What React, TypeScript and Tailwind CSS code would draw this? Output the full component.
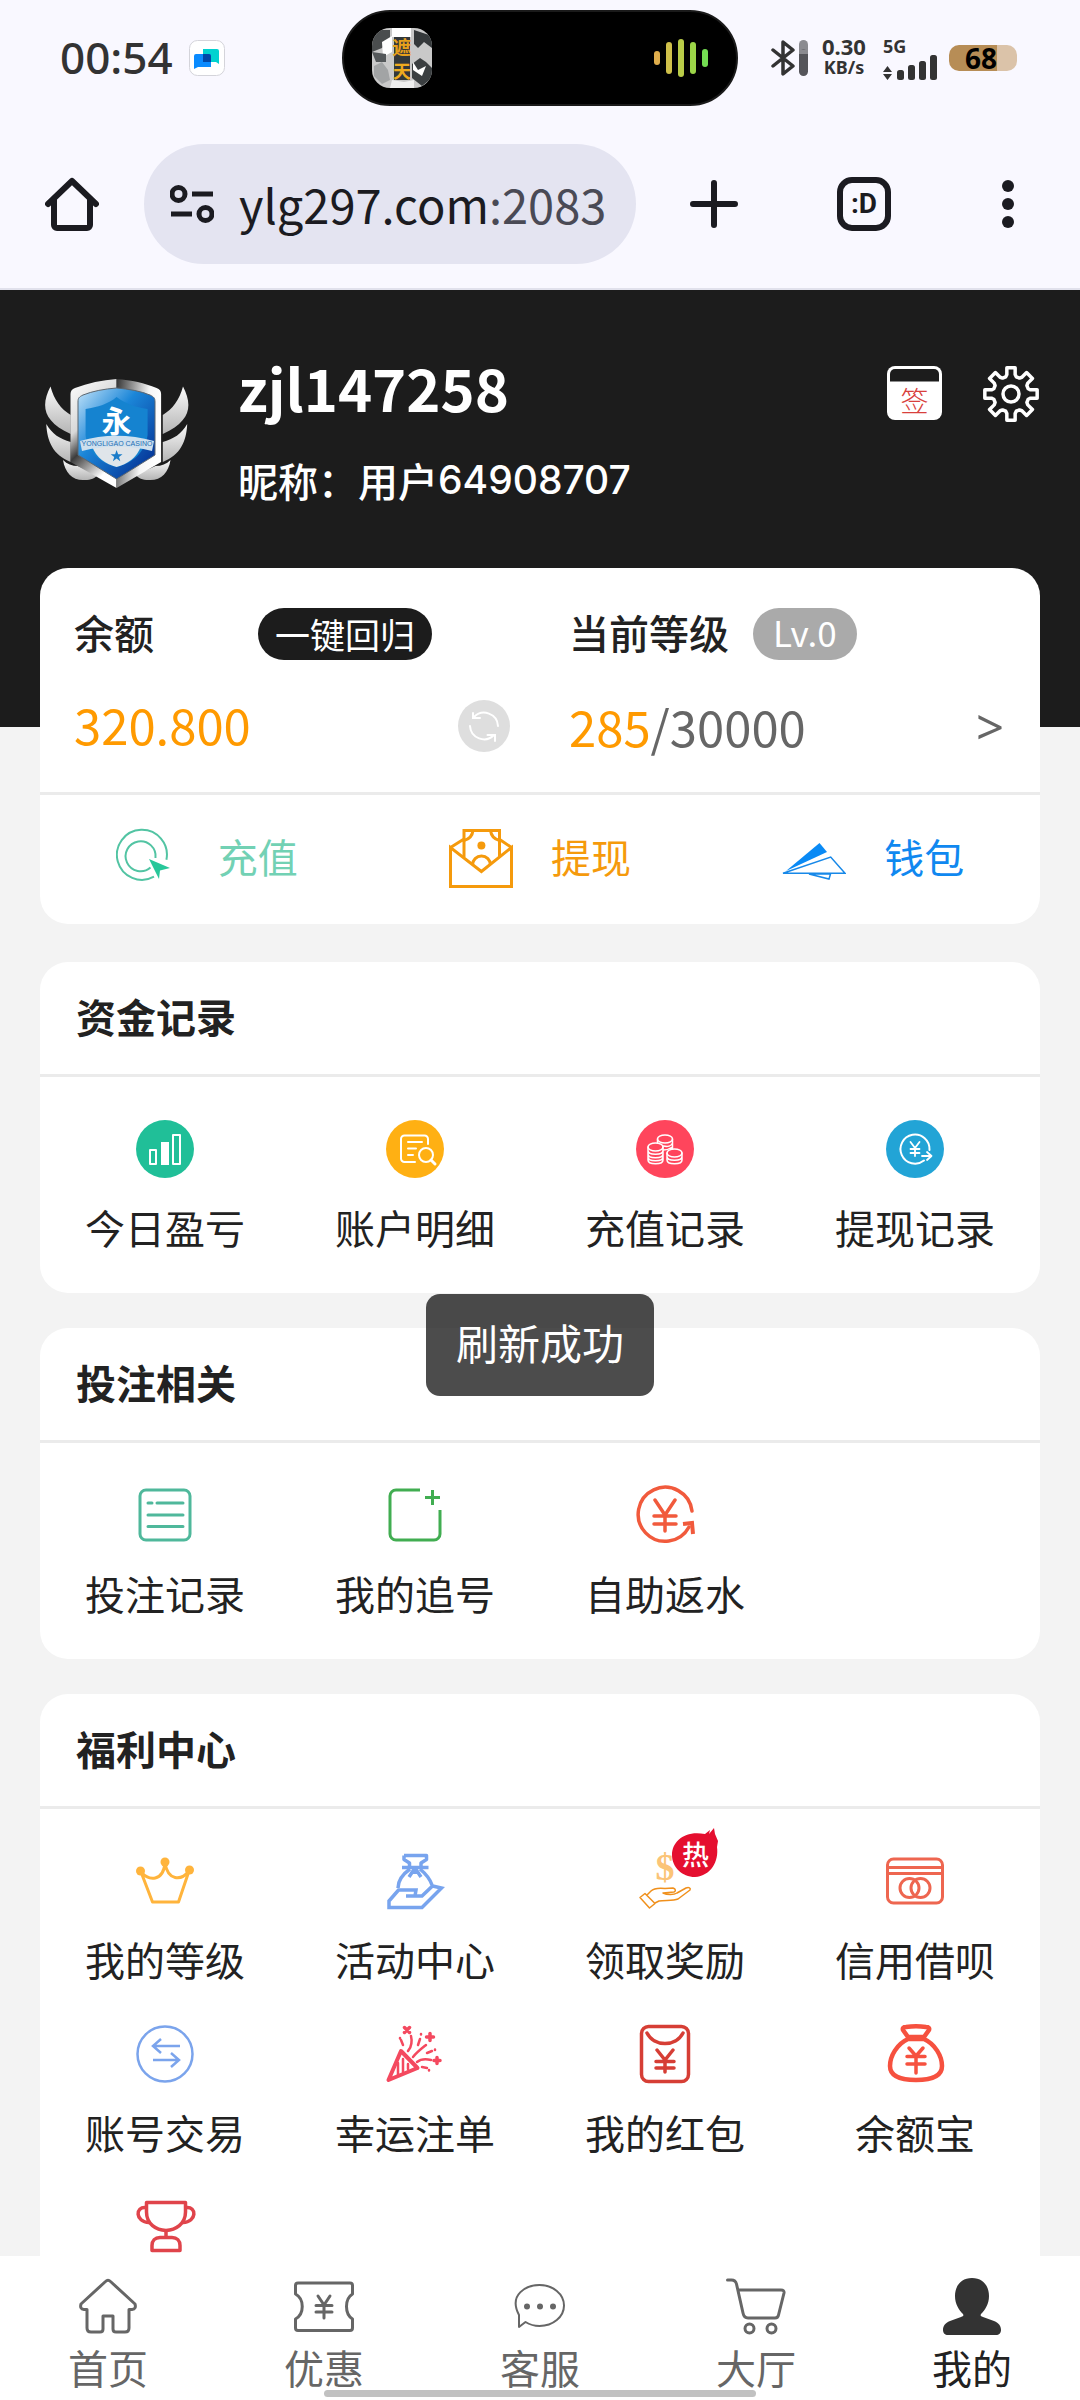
import React from "react";

type IconProps = { children: React.ReactNode; color: string; width?: number };

function TileIcon({ children, color, width = 3 }: IconProps) {
  return (
    <svg
      viewBox="0 0 58 58"
      className="h-[58px] w-[58px] overflow-visible"
      fill="none"
      stroke={color}
      strokeWidth={width}
      strokeLinecap="round"
      strokeLinejoin="round"
      aria-hidden="true"
    >
      {children}
    </svg>
  );
}

function Disc({ children, fill }: { children: React.ReactNode; fill: string }) {
  return (
    <TileIcon color="#fff" width={2}>
      <circle cx="29" cy="29" r="29" fill={fill} stroke="none" />
      {children}
    </TileIcon>
  );
}

const gearPath = (() => {
  const point = (r: number, deg: number) => {
    const a = (deg * Math.PI) / 180;
    return `${(29 + r * Math.cos(a)).toFixed(2)} ${(29 + r * Math.sin(a)).toFixed(2)}`;
  };
  let d = "";
  for (let k = 0; k < 8; k++) {
    const c = k * 45;
    d += `${k === 0 ? "M" : "L"}${point(18, c - 17)}`;
    d += `L${point(20, c - 12)}L${point(26.5, c - 9)}L${point(26.5, c + 9)}L${point(20, c + 12)}L${point(18, c + 17)}`;
  }
  return `${d}Z`;
})();

function StatusBar() {
  return (
    <div className="grid h-[116px] grid-cols-[1fr_396px_1fr] items-center text-[#333]">
      <div className="flex items-center gap-4 pl-[60px]">
        <span className="pb-[3px] font-['Noto_Sans','Noto_Sans_CJK_SC',sans-serif] text-[44px] leading-none font-medium">00:54</span>
        <svg viewBox="0 0 36 36" className="h-9 w-9" aria-hidden="true">
          <rect x="0.5" y="0.5" width="35" height="35" rx="8" fill="#fff" stroke="#d4d4da" />
          <path d="M14 9h14a2 2 0 0 1 2 2v13l-3-2H14z" fill="#00d2d0" />
          <path d="M7 14h13a2 2 0 0 1 2 2v11H9l-4 2V16a2 2 0 0 1 2-2z" fill="#0a8bff" />
          <path d="M14 14h6a2 2 0 0 1 2 2v6h-8z" fill="#0048a8" />
        </svg>
      </div>
      <div className="flex h-24 items-center justify-between rounded-full border-2 border-[#1a1a1a] bg-black pr-[28px] pl-[28px]">
        <svg viewBox="0 0 60 60" className="h-[60px] w-[60px]" aria-hidden="true">
          <defs>
            <clipPath id="cover"><rect width="60" height="60" rx="18" /></clipPath>
          </defs>
          <g clipPath="url(#cover)">
            <rect width="60" height="60" fill="#c9c9c9" />
            <path d="M0 10l8-8h10v10l-8 8-10 4z" fill="#4a4d4e" />
            <path d="M20 0h19v9H20z" fill="#fff" />
            <path d="M42 2l18 6v12l-8-6-6 6-4-4z" fill="#35393b" />
            <path d="M10 14l10-6v16l-9 5z" fill="#fff" />
            <path d="M2 38l8-4 6 8 2 10-8 4-8-8z" fill="#a2a4a5" />
            <path d="M0 24l14 2v8L4 34z" fill="#54585a" />
            <path d="M40 36l8-6 6 4 6 6v10l-10 8-10-8z" fill="#3b3f41" />
            <path d="M41 34l5 8 8-4-4 10-9-6z" fill="#fff" />
            <path d="M20 52l12 2 10-2v8H18z" fill="#efefef" />
            <path d="M22 9h16v43H22z" fill="#33383a" />
          </g>
          <text x="30" y="27" textAnchor="middle" fontSize="19" fontWeight="700" fill="#e8a01b" fontFamily="'Noto Sans CJK SC', sans-serif">遮</text>
          <text x="30" y="50" textAnchor="middle" fontSize="18" fontWeight="700" fill="#f0ab1e" fontFamily="'Noto Sans CJK SC', sans-serif">天</text>
        </svg>
        <svg viewBox="0 0 54 38" className="h-[38px] w-[54px]" strokeWidth="6" strokeLinecap="round" aria-hidden="true">
          <path d="M3 15v8" stroke="#e0ae4c" />
          <path d="M15 6v26" stroke="#cfc04a" />
          <path d="M27 3v32" stroke="#b9cc48" />
          <path d="M39 6v26" stroke="#9cd548" />
          <path d="M51 13v12" stroke="#74dd52" />
        </svg>
      </div>
      <div className="flex items-center pl-[33px] font-['Noto_Sans','Noto_Sans_CJK_SC',sans-serif] font-bold">
        <svg viewBox="0 0 37 36" className="h-9 w-[37px] shrink-0" fill="none" aria-hidden="true">
          <path d="M2 10l20 16-10 8V2l10 8L2 26" stroke="#333" strokeWidth="3.500" strokeLinejoin="round" strokeLinecap="round" />
          <path d="M32.500 4.500v10" stroke="#8b8b90" strokeWidth="9" strokeLinecap="round" />
          <path d="M32.500 14v17.500" stroke="#55555a" strokeWidth="9" strokeLinecap="round" />
          <path d="M28 10h9v4h-9z" fill="#8b8b90" />
        </svg>
        <div className="ml-[14px] flex flex-col items-center pb-1">
          <span className="text-[22px] leading-[22px]">0.30</span>
          <span className="text-[18px] leading-[20px]">KB/s</span>
        </div>
        <div className="ml-[17px] flex flex-col">
          <span className="text-[18px] leading-[18px]">5G</span>
          <svg viewBox="0 0 54 25" className="h-[25px] w-[54px]" fill="#333" aria-hidden="true">
            <path d="M4.500 11l4.500 6H0zM4.500 25L0 19h9z" />
            <rect x="14" y="15" width="7" height="10" rx="2.500" />
            <rect x="25" y="10" width="7" height="15" rx="2.500" />
            <rect x="36" y="6" width="7" height="19" rx="2.500" />
            <rect x="47" y="0" width="7" height="25" rx="2.500" />
          </svg>
        </div>
        <div className="ml-3 flex h-[26px] w-[68px] items-center justify-center rounded-[10px] bg-[linear-gradient(90deg,#b78d56_70%,#dbc3a9_70%)] pr-1">
          <span className="text-[28px] leading-none text-black">68</span>
        </div>
      </div>
    </div>
  );
}

function BrowserBar() {
  return (
    <div className="flex items-center border-b-2 border-[#e1e1ec] pt-7 pr-[54px] pb-6 pl-[45px] text-[#1b1b21]">
      <button aria-label="主页" className="shrink-0">
        <svg viewBox="0 0 54 54" className="h-[54px] w-[54px]" fill="none" stroke="currentColor" strokeWidth="6" strokeLinejoin="round" strokeLinecap="round" aria-hidden="true">
          <path d="M3 27L27 4l24 23M9 23v25a3 3 0 0 0 3 3h30a3 3 0 0 0 3-3V23" />
        </svg>
      </button>
      <button className="ml-[45px] flex h-[120px] min-w-0 flex-1 items-center gap-[25px] rounded-full bg-[#e4e4f1] pr-5 pl-[26px]">
        <svg viewBox="0 0 44 38" className="h-[38px] w-11 shrink-0" fill="none" stroke="currentColor" strokeWidth="5" aria-hidden="true">
          <ellipse cx="8.500" cy="9" rx="6.500" ry="6.500" />
          <path d="M22 9h21M1 29h21" />
          <ellipse cx="35.500" cy="29" rx="6.500" ry="6.500" />
        </svg>
        <span className="min-w-0 overflow-hidden font-['Noto_Sans_CJK_SC',sans-serif] text-[47px] leading-[72px] whitespace-nowrap">
          ylg297.com<span className="text-[#4a4a55]">:2083</span>
        </span>
      </button>
      <button aria-label="新标签页" className="ml-[54px] shrink-0">
        <svg viewBox="0 0 48 48" className="h-12 w-12" stroke="currentColor" strokeWidth="6" strokeLinecap="round" aria-hidden="true">
          <path d="M24 3v42M3 24h42" />
        </svg>
      </button>
      <button aria-label="标签页" className="ml-[99px] flex h-[54px] w-[54px] shrink-0 items-center justify-center rounded-[15px] border-6 border-current font-['Roboto',sans-serif] text-[28px] leading-none font-bold">
        :D
      </button>
      <button aria-label="更多" className="ml-[99px] flex w-9 shrink-0 justify-center">
        <svg viewBox="0 0 12 48" className="h-12 w-3" fill="currentColor" aria-hidden="true">
          <circle cx="6" cy="6" r="6" />
          <circle cx="6" cy="24" r="6" />
          <circle cx="6" cy="42" r="6" />
        </svg>
      </button>
    </div>
  );
}

function Logo() {
  const wing = (
    <g fill="url(#silver)">
      <path d="M6.500 7.500C-3 26-2 42 26.700 55V36C17 30 10 21 6.500 7.500z" />
      <path d="M2.300 45C3 62 9 76 26.700 83V63C16 60 8 55 2.300 45z" />
      <path d="M19 81c2 13 10 21 22 20 6 0 10-2 13-5L34 87c-6 0-11-2-15-6z" />
    </g>
  );
  return (
    <svg viewBox="0 0 146 109" className="h-[109px] w-[146px] shrink-0" role="img" aria-label="永利高">
      <defs>
        <linearGradient id="silver" x1="0" y1="0" x2="0" y2="1">
          <stop offset="0" stopColor="#fafafa" />
          <stop offset="1" stopColor="#b4b4b4" />
        </linearGradient>
        <linearGradient id="rimLeft" x1="0" y1="0" x2="0.400" y2="1">
          <stop offset="0" stopColor="#fff" />
          <stop offset="0.450" stopColor="#d8d8d8" />
          <stop offset="0.650" stopColor="#3c3c3c" />
          <stop offset="1" stopColor="#fff" />
        </linearGradient>
        <linearGradient id="rimRight" x1="0" y1="0" x2="1" y2="0.300">
          <stop offset="0" stopColor="#333" />
          <stop offset="0.700" stopColor="#f5f5f5" />
          <stop offset="1" stopColor="#fff" />
        </linearGradient>
        <linearGradient id="field" x1="0" y1="0" x2="1" y2="1">
          <stop offset="0" stopColor="#c4e4fa" />
          <stop offset="0.400" stopColor="#1b86d8" />
          <stop offset="1" stopColor="#00248a" />
        </linearGradient>
      </defs>
      {wing}
      <g transform="matrix(-1 0 0 1 145.500 0)">{wing}</g>
      <path d="M72.600 0C58 1 44 4 31 9c-3 1-4.500 3-4.500 6v68l46 26z" fill="url(#rimLeft)" />
      <path d="M72.600 0c15 1 28 4 40 9 3 1 4.500 3 4.500 6v68l-44.500 26z" fill="url(#rimRight)" />
      <path d="M72.600 9C60 10 49 12 39 16c-4 2-5 3-5 7v53l38.600 24L111 76V23c0-4-1-5-5-7-10-4-21-6-33.400-7z" fill="url(#field)" stroke="#5b6670" strokeWidth="1" />
      <path d="M72.600 18c-8 7-19 10-31 12v26c1 15 13 28 31 32 18-4 29-17 31-32V30c-12-2-22-5-31-12z" fill="#1583d0" />
      <path d="M48 67h49c-4 12-14 18-24.400 21C62 85 52 79 48 67z" fill="#dfe5ea" />
      <path d="M36 62c24-7 49-7 74 0l-2 10c-23-6-47-6-70 0z" fill="#cfe0ee" />
      <text x="72.600" y="53" textAnchor="middle" fontSize="30" fontWeight="700" fill="#fff" fontFamily="'Noto Sans CJK SC', sans-serif">永</text>
      <text x="73" y="67" textAnchor="middle" fontSize="7" fill="#1d6fb4" fontFamily="'Liberation Sans', sans-serif">YONGLIGAO CASINO</text>
      <path d="M72.600 71l1.500 4.200h4.400l-3.500 2.700 1.300 4.300-3.700-2.600-3.700 2.600 1.300-4.300-3.500-2.700h4.400z" fill="#1a7cc9" />
    </svg>
  );
}

function ProfileHeader() {
  return (
    <header className="flex items-start bg-[#1c1c1c] px-10 pt-[73px] pb-[217px] text-white">
      <div className="pt-4 pl-1"><Logo /></div>
      <div className="-mt-3 ml-12 min-w-0 flex-1">
        <h1 className="text-[58px] leading-[72px] font-bold">zjl147258</h1>
        <p className="mt-[27px] flex items-center text-[40px] leading-[60px] font-medium">
          昵称：用户<span className="font-['Inter',sans-serif] text-[39px]">64908707</span>
        </p>
      </div>
      <button aria-label="签到" className="mt-[3px] shrink-0">
        <svg viewBox="0 0 55 54" className="h-[54px] w-[55px]" aria-hidden="true">
          <rect width="55" height="54" rx="8" fill="#fff" />
          <path d="M3 15.500V8a5 5 0 0 1 5-5h39a5 5 0 0 1 5 5v7.500z" fill="#1c1c1c" />
          <text x="27.500" y="46" textAnchor="middle" fontSize="28" fontWeight="300" fill="#d8403c" fontFamily="'Noto Sans CJK SC', sans-serif">签</text>
        </svg>
      </button>
      <button aria-label="设置" className="mt-[2px] ml-10 shrink-0">
        <svg viewBox="0 0 58 58" className="h-[58px] w-[58px]" fill="none" stroke="#fff" strokeWidth="3.500" strokeLinejoin="round" aria-hidden="true">
          <path d={gearPath} />
          <circle cx="29" cy="29" r="8" />
        </svg>
      </button>
    </header>
  );
}

function RechargeIcon() {
  return (
    <svg viewBox="0 0 64 64" className="h-16 w-16" fill="none" stroke="#52c4a3" strokeWidth="2" aria-hidden="true">
      <path d="M50.400 33.800A25 25 0 1 0 38 50.700" />
      <path d="M39.500 32a15 15 0 1 0-5 9.500" />
      <path d="M33 33l21 9-10 2.500-1 8.500z" fill="#27c79a" stroke="none" />
    </svg>
  );
}

function WithdrawIcon() {
  return (
    <svg viewBox="0 0 64 64" className="h-16 w-16" fill="none" stroke="#f59a0c" strokeWidth="3" aria-hidden="true">
      <path d="M1.500 21.500V60.500h61V21.500L32.400 45.500z" />
      <path d="M1.500 21.500L15 13M62.500 21.500L50 13M15 31V4.500h35.500V31" />
      <path d="M24 4.500q-1 8-9 10M41.500 4.500q1 8 9 10" />
      <path d="M23.500 39a9 9 0 1 1 18 0" />
      <circle cx="32.400" cy="19.500" r="4" fill="#f59a0c" stroke="none" />
    </svg>
  );
}

function WalletIcon() {
  return (
    <svg viewBox="0 0 64 64" className="h-16 w-16" fill="none" stroke="#1788e8" strokeWidth="1.500" aria-hidden="true">
      <path d="M4 45L37.500 17l7.500 9z" fill="#0a8af5" stroke="none" />
      <path d="M1 47.300L48.700 31 63 47.300z" />
      <path d="M27 48l20 5 1.500-5z" />
    </svg>
  );
}

function BalanceCard() {
  const actions = [
    { label: "充值", color: "text-[#72d1b4]", icon: <RechargeIcon /> },
    { label: "提现", color: "text-[#f59a0c]", icon: <WithdrawIcon /> },
    { label: "钱包", color: "text-[#1088f0]", icon: <WalletIcon /> },
  ];
  return (
    <section className="-mt-[159px] mb-[3px] rounded-[28px] bg-white">
      <div className="grid grid-cols-2 pt-9 pb-7">
        <div className="flex flex-col pr-[30px] pl-[34px]">
          <div className="flex h-[60px] items-center">
            <h2 className="w-[184px] pb-1 text-[40px] leading-[60px] font-medium">余额</h2>
            <button className="h-[52px] rounded-full bg-[#1c1c1c] px-[17px] text-[35px] leading-[48px] text-white">一键回归</button>
          </div>
          <div className="mt-6 flex h-[76px] items-center justify-between">
            <span className="pb-1 text-[49px] leading-[72px] text-[#ff9a00]">320.800</span>
            <button aria-label="刷新">
              <svg viewBox="0 0 52 52" className="h-[52px] w-[52px]" fill="none" stroke="#fff" strokeWidth="2" strokeLinecap="round" aria-hidden="true">
                <circle cx="26" cy="26" r="26" fill="#dedede" stroke="none" />
                <path d="M16 17a14 14 0 0 1 24 9M36 35a14 14 0 0 1-24-9" />
                <path d="M15 13v5h7M29.500 35H37v6" />
              </svg>
            </button>
          </div>
        </div>
        <div className="flex flex-col pr-9 pl-[29px]">
          <div className="flex h-[60px] items-center gap-6">
            <h2 className="pb-1 text-[40px] leading-[60px] font-medium">当前等级</h2>
            <span className="h-[52px] rounded-full bg-[#aaa] px-5 text-[35px] leading-[48px] text-white">Lv.0</span>
          </div>
          <a href="#level" className="mt-6 flex h-[76px] items-center justify-between text-[49px] leading-[72px] text-[#666]">
            <span><span className="text-[#ff9a00]">285</span>/30000</span>
            <span className="font-['Noto_Sans',sans-serif]">&gt;</span>
          </a>
        </div>
      </div>
      <div className="grid h-[132px] grid-cols-3 border-t-3 border-[#ebebeb]">
        {actions.map((a) => (
          <button key={a.label} className={`flex items-center justify-center gap-[38px] pb-[3px] text-[40px] leading-[60px] ${a.color}`}>
            {a.icon}
            <span className="pb-1">{a.label}</span>
          </button>
        ))}
      </div>
    </section>
  );
}

type Tile = { label: string; icon: React.ReactNode; hot?: boolean; bare?: boolean };

const funds: Tile[] = [
  {
    label: "今日盈亏",
    icon: (
      <Disc fill="#20bf98">
        <path d="M14 30h6v14h-6zM37 15h7v29h-7z" />
        <path d="M25 22h8v23h-8z" fill="#fff" stroke="none" />
      </Disc>
    ),
  },
  {
    label: "账户明细",
    icon: (
      <Disc fill="#ffb013">
        <path d="M42 24v-5a3.500 3.500 0 0 0-3.500-3.500h-20A3.500 3.500 0 0 0 15 19v19.500a3.500 3.500 0 0 0 3.500 3.500H29M22 22h14M22 28.500h8M22 35h5" />
        <circle cx="40" cy="35" r="7" />
        <path d="M45 40l4 4" strokeWidth="3" />
      </Disc>
    ),
  },
  {
    label: "充值记录",
    icon: (
      <Disc fill="#ff455c">
        <g strokeWidth="1.500">
          <ellipse cx="29" cy="19" rx="7.500" ry="4" />
          <path d="M21.500 19v4M36.500 19v10M27.500 26c4 1 8 0 9-3M27.500 30c4 0 6-1 9-3" />
          <ellipse cx="19.500" cy="27" rx="7.500" ry="4" />
          <path d="M12 27v13c0 5 15 5 15 0V27M12 30.500c0 5 15 5 15 0M12 34c0 5 15 5 15 0M12 37c0 5 15 5 15 0" />
          <ellipse cx="38.500" cy="33" rx="7.500" ry="4" />
          <path d="M31 33v7c0 5 15 5 15 0v-7M31 36.500c0 5 15 5 15 0" />
        </g>
      </Disc>
    ),
  },
  {
    label: "提现记录",
    icon: (
      <Disc fill="#22a4d6">
        <path d="M43.500 30A14.500 14.500 0 1 0 38 40.500" />
        <path d="M24.500 22l4.500 6 4.500-6M29 28v8M24.500 29h9M24.500 33h9M36 36h9M41 32l4.500 4-4.500 4" strokeWidth="1.800" />
      </Disc>
    ),
  },
];

const bets: Tile[] = [
  {
    label: "投注记录",
    icon: (
      <TileIcon color="#4fb89b" width={3}>
        <rect x="4" y="4" width="50" height="50" rx="6" />
        <path d="M12 17h4M21 17h26M12 29h35M12 40.500h35" />
      </TileIcon>
    ),
  },
  {
    label: "我的追号",
    icon: (
      <TileIcon color="#41ad51" width={3}>
        <path d="M34 4H10a6 6 0 0 0-6 6v38a6 6 0 0 0 6 6h38a6 6 0 0 0 6-6V24M46.500 4v15M39 11.500h15" strokeLinecap="butt" />
      </TileIcon>
    ),
  },
  {
    label: "自助返水",
    icon: (
      <TileIcon color="#f15a3c" width={3.5}>
        <path d="M56 25A27 27 0 1 0 53 41" />
        <path d="M47 38l9-1 1 11" strokeLinecap="butt" strokeLinejoin="miter" strokeWidth="4" />
        <path d="M19 14l10 15 10-15M29 29v16M18 30h22M18 38h22" />
      </TileIcon>
    ),
  },
];

const welfare: Tile[] = [
  {
    label: "我的等级",
    icon: (
      <TileIcon color="#ffb43c" width={3}>
        <path d="M5 20l11.500 30h26L53 19M5 20c8 9 22 10 24-9 3 18 16 18 24 8" />
        <g fill="#ffb43c" stroke="none">
          <circle cx="4.500" cy="19" r="4.500" />
          <circle cx="29" cy="10" r="4.500" />
          <circle cx="53.500" cy="18" r="4.500" />
        </g>
      </TileIcon>
    ),
  },
  {
    label: "活动中心",
    icon: (
      <TileIcon color="#78a4ee" width={3.5}>
        <path d="M18 3.500h22.500v4L35 11v4M18 3.500v4L23.500 11v4M16 15.500h26.500" strokeLinecap="butt" />
        <path d="M24 17C17 22 12 28 12 36M34 17c6 5 10 10 12 16M29 16l-6 9M29 16l6 9M29 17v5" strokeLinecap="butt" />
        <path d="M3 49l9.500-11H30l-1 6h-9 16L46.500 34l9 2L36 55.500H3z" strokeLinejoin="miter" />
      </TileIcon>
    ),
  },
  {
    label: "领取奖励",
    hot: true,
    icon: (
      <TileIcon color="#f0901c" width={1.5}>
        <text x="29" y="28" textAnchor="middle" fontSize="38" fontWeight="700" fill="#fbc477" stroke="none" fontFamily="'Liberation Serif', serif">$</text>
        <path d="M4 45.500l5-4 10 10-5.500 4.500zM11 43l4-4c3-3 9-3 14-2.500l8-.5c3 1 3 3 1 4l-11 1c4 2 11 2 14 0l9-5c3-1 5 0 4 2L42 47c-5 2-13 1-19 2l-4 2" />
      </TileIcon>
    ),
  },
  {
    label: "信用借呗",
    icon: (
      <TileIcon color="#ee6650" width={3}>
        <rect x="1.500" y="7" width="55" height="44" rx="6" />
        <path d="M2 15.500h54M2 21.500h54" />
        <circle cx="23.500" cy="36" r="9.500" />
        <circle cx="34.500" cy="36" r="9.500" />
      </TileIcon>
    ),
  },
  {
    label: "账号交易",
    icon: (
      <TileIcon color="#7ba4ec" width={2.5}>
        <circle cx="29" cy="29" r="27.500" />
        <path d="M17 21h27M25 14l-8 7 8 7M17 35h26M35 28l8 7-8 7" strokeLinecap="butt" strokeLinejoin="miter" />
      </TileIcon>
    ),
  },
  {
    label: "幸运注单",
    icon: (
      <TileIcon color="#f4495f" width={2.5}>
        <path d="M2.500 55L15 26l16.500 17z" strokeWidth="4" />
        <path d="M12 38v12M17 34v13M22 39v5" />
        <path d="M22 26c4-4 4-11 3-15M27 32c4-5 8-8 13-12M31 37c5-4 10-3 14-2M17 20l-2-5M32 20l2-6M41 28l5-2M36 42l5 1" />
        <path d="M18.500 2.500l5 5M23.500 2.500l-5 5M44 8.500v7M40.500 12h7M51 32.500v6M48 35.500h6" strokeWidth="3.500" />
        <path d="M14 13v.5M35 9v.5M49 24.500v.500M43 45v.5" />
      </TileIcon>
    ),
  },
  {
    label: "我的红包",
    icon: (
      <TileIcon color="#d63e35" width={3.5}>
        <rect x="5.500" y="1.500" width="47" height="55" rx="7" />
        <path d="M11 8c7 14 29 14 36 0M21 25l8 10 8-10M29 35v12M20 36.500h18M20 43h18" />
      </TileIcon>
    ),
  },
  {
    label: "余额宝",
    icon: (
      <TileIcon color="#f6513f" width={4.5}>
        <path d="M22 12L17 5q-1-3 3-3 10-1.500 20 0 4 0 3 3l-5 7z" />
        <path d="M22 14C11 19 4 31 4 41c0 10 9 14 26 14s26-4 26-14c0-10-7-22-18-27z" />
        <path d="M23 23l7 8 7-8M30 31v17M21 31.500h18M21 39h18" strokeWidth="3.500" />
      </TileIcon>
    ),
  },
  {
    label: "奖杯",
    bare: true,
    icon: (
      <TileIcon color="#e0444b" width={3.5}>
        <path d="M10.500 4.500h39V14c0 12-10 18-19.500 18.500C20 32 10.500 26 10.500 14z" />
        <path d="M10 9.500C-1 8-1 24 13 24.500M50 9.500c11-1.500 11 14.500-3 15M30 33v6M16 52.500v-5c0-5 3-8 8-8h12c5 0 8 3 8 8v5z" />
      </TileIcon>
    ),
  },
];

function HotBadge() {
  return (
    <svg viewBox="0 0 48 50" className="absolute -top-6 left-9 h-[50px] w-12" aria-hidden="true">
      <path d="M33 6l5-4-1 4 5-6 1 6 3 7-1 6c2 14-6 29-22 30C10 49 0 39 0 27 0 13 13 2 33 6z" fill="#e50f2f" />
      <text x="23.500" y="37" textAnchor="middle" fontSize="27" fontWeight="500" fill="#fff" fontFamily="'Noto Sans CJK SC', sans-serif">热</text>
    </svg>
  );
}

function TileSection({ title, tiles }: { title: string; tiles: Tile[] }) {
  return (
    <section className="rounded-[28px] bg-white">
      <h2 className="border-b-3 border-[#ebebeb] px-9 pt-6 pb-7 text-[40px] leading-[60px] font-bold">{title}</h2>
      <div className="grid grid-cols-4 gap-y-9 pt-[43px] pb-9">
        {tiles.map((t) => (
          <button key={t.label} aria-label={t.label} className="flex flex-col items-center gap-[19px]">
            <span className="relative">
              {t.icon}
              {t.hot && <HotBadge />}
            </span>
            {!t.bare && <span className="text-[40px] leading-[60px]">{t.label}</span>}
          </button>
        ))}
      </div>
    </section>
  );
}

const navItems = [
  {
    label: "首页",
    icon: <path d="M27.500 3.500Q30 1 32.500 3.500L57 26q1.500 5-3 5.500H51V50q0 4-4 4H38q-3 0-3-3V38H25V51q0 3-3 3H13q-4 0-4-4V31.500H6q-4.500-.500-3-5.500z" />,
  },
  {
    label: "优惠",
    icon: (
      <>
        <path d="M4 5h52q2.500 0 2.500 2.500V16c-8 5-8 20 0 25v9q0 2.500-2.500 2.500H4Q1.500 52.500 1.500 50v-9c9-5 9-20 0-25V7.500Q1.500 5 4 5z" />
        <path d="M24 18l6 9 6-9M30 27v13M22 27.500h16M22 34h16" />
      </>
    ),
  },
  {
    label: "客服",
    icon: (
      <>
        <path d="M9 49V37C-2 16 17 7 29.500 7 43 7 54 16 54 27.500S43 48 29.500 48c-5 0-10-1.500-14-4z" strokeWidth="2" />
        <g fill="#666" stroke="none">
          <circle cx="17" cy="28.500" r="3" />
          <circle cx="30" cy="28.500" r="3" />
          <circle cx="43" cy="28.500" r="3" />
        </g>
      </>
    ),
  },
  {
    label: "大厅",
    icon: (
      <>
        <path d="M1.500 2h4q4 0 5 4l6.500 29q1 5 5 5h27q3 0 3.500-3L58 15q.5-3-3-3H12.500" />
        <circle cx="23.500" cy="50.500" r="4.500" />
        <circle cx="45.500" cy="50.500" r="4.500" />
      </>
    ),
  },
  {
    label: "我的",
    active: true,
    icon: <path d="M30 0c11 0 17 8 17 18 0 8-4 14-8 18-1 2 0 2 2 3l11 4c5 2 7 5 7 9 0 3-2 5-5 5H6c-3 0-5-2-5-5 0-4 2-7 7-9l11-4c2-1 3-1 2-3-4-4-8-10-8-18C13 8 19 0 30 0z" fill="#333" stroke="none" />,
  },
];

function BottomNav() {
  return (
    <nav className="relative grid shrink-0 grid-cols-5 bg-white pt-[22px] pb-[9px]">
      {navItems.map((n) => (
        <a key={n.label} href={`#${n.label}`} className={`flex flex-col items-center gap-[5px] text-[40px] leading-[48px] ${n.active ? "text-[#222]" : "text-[#666]"}`}>
          <svg viewBox="0 0 60 60" className="h-[60px] w-[60px]" fill="none" stroke="#666" strokeWidth="3" strokeLinecap="round" strokeLinejoin="round" aria-hidden="true">
            {n.icon}
          </svg>
          {n.label}
        </a>
      ))}
      <span className="absolute bottom-[3px] left-[30%] h-[7px] w-[40%] rounded-full bg-[#c1c1c1]" />
    </nav>
  );
}

export default function App() {
  return (
    <div className="flex h-screen flex-col bg-[#f9f8ff] font-['Noto_Sans_CJK_SC',sans-serif] text-[#222]">
      <StatusBar />
      <BrowserBar />
      <div className="relative flex min-h-0 flex-1 flex-col bg-[#f3f3f3]">
        <main className="min-h-0 flex-1 overflow-y-auto [scrollbar-width:none]">
          <ProfileHeader />
          <div className="flex flex-col gap-[35px] px-10">
            <BalanceCard />
            <TileSection title="资金记录" tiles={funds} />
            <TileSection title="投注相关" tiles={bets} />
            <TileSection title="福利中心" tiles={welfare} />
          </div>
        </main>
        <BottomNav />
        <div className="pointer-events-none absolute inset-0 flex items-center justify-center">
          <div role="status" className="rounded-[14px] bg-black/70 px-[30px] pt-[18px] pb-6 text-[42px] leading-[60px] text-white">刷新成功</div>
        </div>
      </div>
    </div>
  );
}
